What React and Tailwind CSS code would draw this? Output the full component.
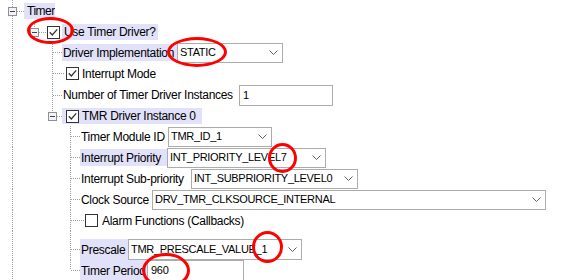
import React from "react";

const DOT = "#a0a0a0";

// dotted segment helpers (pixel columns / rows)
const V = (x, y1, y2) => [x + 0.5, y1, x + 0.5, y2];
const H = (x1, x2, y) => [x1, y + 0.5, x2, y + 0.5];

function Gutter({ w, h, cy, segs = [], box }) {
  return (
    <svg width={w} height={h} className="block shrink-0">
      {segs.map(([x1, y1, x2, y2], i) => (
        <line key={i} x1={x1} y1={y1} x2={x2} y2={y2} stroke={DOT} strokeDasharray="1 1" shapeRendering="crispEdges" />
      ))}
      {box !== undefined && (
        <g shapeRendering="crispEdges">
          <rect x={box + 0.5} y={cy - 4 + 0.5} width="8" height="8" fill="#f3f3f3" stroke="#8f8f8f" />
          <line x1={box + 2} y1={cy + 0.5} x2={box + 7} y2={cy + 0.5} stroke="#2c4274" />
        </g>
      )}
    </svg>
  );
}

function Check({ checked }) {
  return (
    <svg width="13" height="13" className="block shrink-0">
      <rect x="0.5" y="0.5" width="12" height="12" fill="#fff" stroke="#333" shapeRendering="crispEdges" />
      {checked && <polyline points="2.8,6.3 5.3,9 10.2,3.3" fill="none" stroke="#333" strokeWidth="1.3" />}
    </svg>
  );
}

function Chevron() {
  return (
    <svg width="9" height="5" className="block shrink-0">
      <polyline points="0.5,0.5 4.5,4.5 8.5,0.5" fill="none" stroke="#606060" />
    </svg>
  );
}

function Select({ w, h = "h-[20px]", value }) {
  return (
    <div className={`${w} ${h} shrink-0 border border-[#acacac] bg-white flex items-center justify-between pl-[2px] pr-[4px]`}>
      <span className="text-[11px] tracking-[-0.3px] whitespace-nowrap">{value}</span>
      <Chevron />
    </div>
  );
}

function Field({ w, value }) {
  return (
    <div className={`${w} h-[21px] shrink-0 border border-[#acacac] bg-white flex items-center pl-[3px]`}>
      <span className="text-[11px] tracking-[-0.3px]">{value}</span>
    </div>
  );
}

export default function App() {
  const label = "text-[12px] tracking-[-0.3px] whitespace-nowrap overflow-hidden flex items-center shrink-0";
  const lav = "bg-[#e1e1f9]";

  return (
    <div className="relative w-[578px] h-[280px] overflow-hidden bg-white text-black font-['Liberation_Sans',Arial,sans-serif]">
      <div className="flex flex-col">
        {/* Timer */}
        <div className="flex h-[22px] items-center">
          <Gutter w={24} h={22} cy={11} box={8} segs={[V(12, 0, 7), V(12, 16, 22), H(17, 24, 11), V(34, 19, 22)]} />
          <div className={`${label} ${lav} h-[16px] w-[31px] pl-[3px] tracking-[-0.5px]`}>Timer</div>
        </div>

        {/* Use Timer Driver? */}
        <div className="flex h-[20px] items-center">
          <Gutter w={47} h={20} cy={10} box={30} segs={[V(12, 0, 20), V(34, 0, 6), H(39, 47, 10)]} />
          <Check checked />
          <div className={`${label} ${lav} ml-[2px] h-[16px] px-[2px]`}>Use Timer Driver?</div>
        </div>

        {/* Driver Implementation */}
        <div className="flex h-[21px] items-center">
          <Gutter w={62} h={21} cy={10} segs={[V(12, 0, 21), V(52, 0, 21), H(53, 62, 10)]} />
          <div className={`${label} ${lav} w-[115px] h-[17px] pl-[1px]`}>Driver Implementation</div>
          <Select w="w-[106px]" value="STATIC" />
        </div>

        {/* Interrupt Mode */}
        <div className="flex h-[21px] items-center">
          <Gutter w={66} h={21} cy={10} segs={[V(12, 0, 21), V(52, 0, 21), H(53, 65, 10)]} />
          <Check checked />
          <div className={`${label} ml-[3px]`}>Interrupt Mode</div>
        </div>

        {/* Number of Timer Driver Instances */}
        <div className="flex h-[22px] items-center">
          <Gutter w={62} h={22} cy={11} segs={[V(12, 0, 22), V(52, 0, 22), H(53, 62, 11)]} />
          <div className={`${label} w-[177px] pl-[1px]`}>Number of Timer Driver Instances</div>
          <Field w="w-[94px]" value="1" />
        </div>

        {/* TMR Driver Instance 0 */}
        <div className="flex h-[20px] items-center">
          <Gutter w={62} h={20} cy={10} box={48} segs={[V(12, 0, 20), V(52, 0, 6), H(57, 62, 10)]} />
          <div className={`${label} ${lav} w-[140px] h-[16px] pl-[4px]`}>
            <Check checked />
            <span className="ml-[3px]">TMR Driver Instance 0</span>
          </div>
        </div>

        {/* Timer Module ID */}
        <div className="flex h-[21px] items-center">
          <Gutter w={80} h={21} cy={10} segs={[V(12, 0, 21), V(70, 0, 21), H(71, 80, 10)]} />
          <div className={`${label} w-[88px] pl-[1px]`}>Timer Module ID</div>
          <Select w="w-[104px]" value="TMR_ID_1" />
        </div>

        {/* Interrupt Priority */}
        <div className="flex h-[21px] items-center">
          <Gutter w={80} h={21} cy={10} segs={[V(12, 0, 21), V(70, 0, 21), H(71, 80, 10)]} />
          <div className={`${label} ${lav} w-[87px] h-[17px] pl-[1px]`}>Interrupt Priority</div>
          <Select w="w-[159px]" value="INT_PRIORITY_LEVEL7" />
        </div>

        {/* Interrupt Sub-priority */}
        <div className="flex h-[21px] items-center">
          <Gutter w={80} h={21} cy={10} segs={[V(12, 0, 21), V(70, 0, 21), H(71, 80, 10)]} />
          <div className={`${label} w-[111px] pl-[1px]`}>Interrupt Sub-priority</div>
          <Select w="w-[167px]" value="INT_SUBPRIORITY_LEVEL0" />
        </div>

        {/* Clock Source */}
        <div className="flex h-[21px] items-center">
          <Gutter w={80} h={21} cy={10} segs={[V(12, 0, 21), V(70, 0, 21), H(71, 80, 10)]} />
          <div className={`${label} w-[72px] pl-[1px]`}>Clock Source</div>
          <Select w="w-[394px]" value="DRV_TMR_CLKSOURCE_INTERNAL" />
        </div>

        {/* Alarm Functions */}
        <div className="flex h-[21px] items-center">
          <Gutter w={85} h={21} cy={10} segs={[V(12, 0, 21), V(70, 0, 21), H(71, 84, 10)]} />
          <Check />
          <div className={`${label} ml-[4px]`}>Alarm Functions (Callbacks)</div>
        </div>

        {/* Prescale */}
        <div className="flex h-[29px] items-end">
          <Gutter w={80} h={29} cy={18} segs={[V(12, 0, 29), V(70, 0, 29), H(71, 80, 18)]} />
          <div className="flex h-[21px] items-center">
            <div className={`${label} ${lav} w-[48px] h-[21px] pl-[1px]`}>Prescale</div>
            <Select w="w-[174px]" h="h-[21px]" value="TMR_PRESCALE_VALUE_1" />
          </div>
        </div>

        {/* Timer Period */}
        <div className="flex h-[21px] items-center">
          <Gutter w={80} h={21} cy={10} segs={[V(12, 0, 21), V(70, 0, 10), H(71, 80, 10)]} />
          <div className={`${label} ${lav} w-[67px] h-[21px] pl-[1px]`}>Timer Period</div>
          <Field w="w-[97px]" value="960" />
        </div>
      </div>

      {/* red annotation ellipses */}
      <div className="absolute left-[27px] top-[17px] w-[47px] h-[27px] rounded-[50%] border-[3px] border-[#ff0000]" />
      <div className="absolute left-[167px] top-[37px] w-[60px] h-[30px] rounded-[50%] border-[3px] border-[#ff0000]" />
      <div className="absolute left-[268px] top-[143px] w-[29px] h-[30px] rounded-[50%] border-[3px] border-[#ff0000]" />
      <div className="absolute left-[252px] top-[231px] w-[31px] h-[32px] rounded-[50%] border-[3px] border-[#ff0000]" />
      <div className="absolute left-[142px] top-[253px] w-[48px] h-[35px] rounded-[50%] border-[3px] border-[#ff0000]" />
    </div>
  );
}
